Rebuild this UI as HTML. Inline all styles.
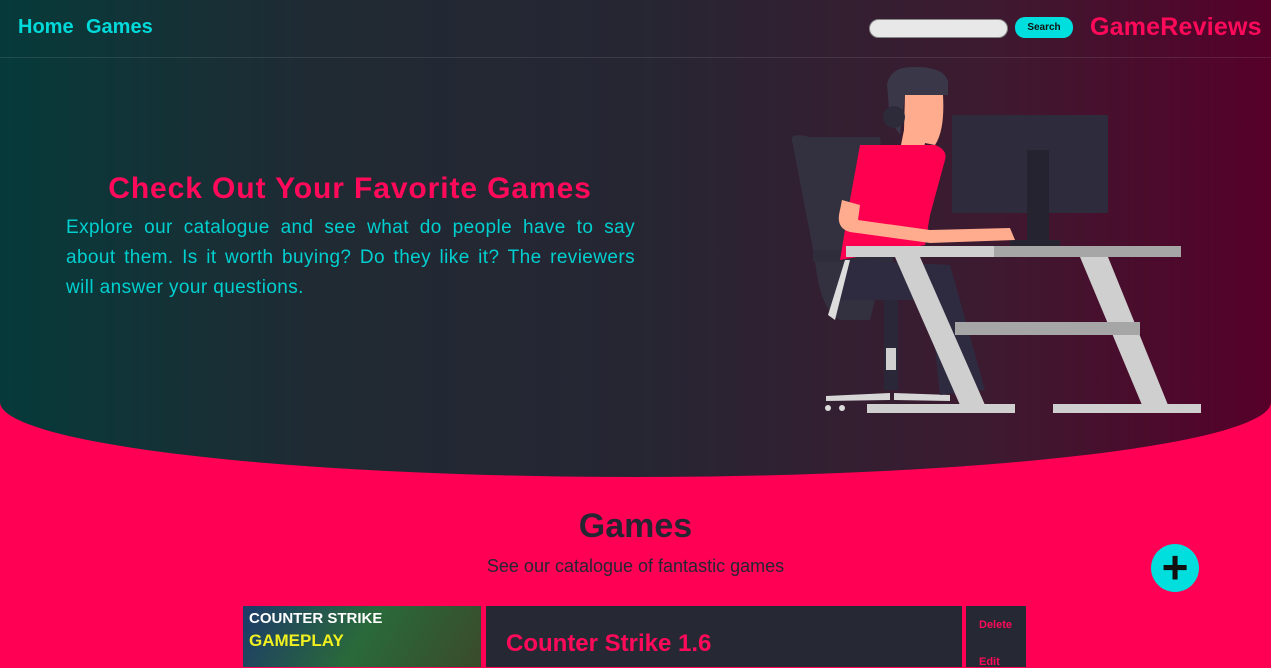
<!DOCTYPE html>
<html><head><meta charset="utf-8"><style>
*{margin:0;padding:0;box-sizing:border-box}
body{width:1271px;height:667px;overflow:hidden;background:#ff0055;font-family:"Liberation Sans",sans-serif;position:relative}
.hero{position:absolute;left:0;top:0;width:1271px;height:477px;background:linear-gradient(90deg,#063a3a 0%,#202a33 25%,#262633 50%,#3d1a30 78%,#560029 100%);border-radius:0 0 50% 50%/0 0 75px 75px;overflow:hidden}
.nav{position:absolute;top:0;left:0;width:100%;height:58px;border-bottom:1px solid rgba(255,255,255,.1)}
.nav a{position:absolute;top:16px;color:#00d9d9;font-weight:bold;font-size:20px;text-decoration:none}
.search{position:absolute;left:869px;top:19px;width:139px;height:19px;border-radius:10px;background:#e8e8e8;border:1px solid #888}
.btn{position:absolute;left:1015px;top:17px;width:58px;height:21px;border-radius:10px;background:#00dede;color:#111;font-size:10px;font-weight:bold;text-align:center;line-height:21px}
.logo{position:absolute;left:1090px;top:13px;color:#ff0a5a;font-weight:bold;font-size:25px;letter-spacing:0.2px}
h1{position:absolute;left:0;width:700px;top:172px;text-align:center;color:#ff0a5a;font-size:30px;font-weight:bold;letter-spacing:0.9px}
.p{position:absolute;left:66px;top:213px;width:569px;color:#00cfcf;font-size:19px;line-height:30px;text-align:justify;letter-spacing:0.4px}
h2{position:absolute;left:0;width:1271px;top:507px;text-align:center;color:#262633;font-size:34px;font-weight:bold}
.sub{position:absolute;left:0;width:1271px;top:556px;text-align:center;color:#262633;font-size:18px}
.plus{position:absolute;left:1151px;top:544px;width:48px;height:48px;border-radius:50%;background:#00dede;color:#111;font-size:46px;line-height:46px;text-align:center;font-weight:bold}
.img{position:absolute;left:243px;top:606px;width:238px;height:61px;background:linear-gradient(120deg,#1d3a6a,#2a6a3a 50%,#3a4a2a)}
.card{position:absolute;left:486px;top:606px;width:476px;height:61px;background:#262933}
.card span{position:absolute;left:20px;top:24px;color:#ff0a5a;font-size:24px;font-weight:bold}
.side{position:absolute;left:966px;top:606px;width:60px;height:61px;background:#262933;color:#ff0a5a;font-size:11px;font-weight:bold}
</style></head><body>
<div class="hero">
<div class="nav"><a style="left:18px">Home</a><a style="left:86px">Games</a>
<div class="search"></div><div class="btn">Search</div><div class="logo">GameReviews</div></div>
<h1>Check Out Your Favorite Games</h1>
<div class="p">Explore our catalogue and see what do people have to say about them. Is it worth buying? Do they like it? The reviewers will answer your questions.</div>
<svg style="position:absolute;left:780px;top:60px" width="430" height="360" viewBox="0 0 430 360">
<path d="M12 80 Q10 72 30 77 L100 77 L110 180 L90 260 L60 260 Q40 250 35 200 Z" fill="#33303f"/>
<rect x="33" y="190" width="80" height="12" fill="#2f2c3c"/>
<rect x="104" y="230" width="14" height="100" fill="#2a2838"/>
<rect x="106" y="288" width="10" height="22" fill="#d0d0d0"/>
<path d="M46 336 L110 333 L110 340 L46 341 Z M114 333 L170 335 L170 341 L114 340Z" fill="#d6d6d6"/>
<circle cx="48" cy="348" r="3" fill="#ddd"/><circle cx="62" cy="348" r="3" fill="#ddd"/>
<path d="M70 200 L170 205 L205 330 L160 335 L150 240 L60 240 Z" fill="#2e2b40"/>
<path d="M55 260 L70 200 L65 200 L48 255Z" fill="#ddd"/>
<rect x="172" y="55" width="156" height="98" fill="#2e2b3d"/>
<rect x="247" y="90" width="22" height="95" fill="#25232f"/>
<rect x="230" y="180" width="50" height="6" fill="#25232f"/>
<path d="M107 25 Q110 6 135 7 Q165 7 168 22 L168 35 L125 35 L120 75 L110 60 Z" fill="#3a3748"/>
<path d="M125 35 L163 35 Q165 70 155 85 L145 83 L143 92 L120 90 L124 70Z" fill="#ffab8d"/>
<circle cx="114" cy="57" r="11" fill="#2d2b3a"/>
<path d="M80 85 L155 85 Q168 90 165 100 L150 155 L145 185 L60 200 L70 140Z" fill="#ff0050"/>
<path d="M62 140 L80 145 L78 160 L150 170 L230 168 L235 180 L150 183 L70 172 Q55 168 60 150Z" fill="#ffab8d"/>
<rect x="66" y="186" width="335" height="11" fill="#a6a6a6"/>
<rect x="66" y="186" width="148" height="11" fill="#cfcfcf"/>
<path d="M115 197 L140 197 L205 345 L180 345Z" fill="#cfcfcf"/>
<path d="M300 197 L328 197 L388 345 L362 345Z" fill="#cfcfcf"/>
<rect x="175" y="262" width="185" height="13" fill="#a6a6a6"/>
<rect x="87" y="344" width="148" height="9" fill="#cfcfcf"/>
<rect x="273" y="344" width="148" height="9" fill="#cfcfcf"/>
</svg>
</div>
<h2>Games</h2>
<div class="sub">See our catalogue of fantastic games</div>
<div class="plus">+</div>
<div class="img"><div style="position:absolute;left:6px;top:4px;color:#fff;font-weight:bold;font-size:15px">COUNTER STRIKE</div><div style="position:absolute;left:6px;top:25px;color:#f0f020;font-weight:bold;font-size:17px">GAMEPLAY</div></div>
<div class="card"><span>Counter Strike 1.6</span></div>
<div class="side"><div style="position:absolute;left:13px;top:13px">Delete</div><div style="position:absolute;left:13px;top:50px">Edit</div></div>
</body></html>
